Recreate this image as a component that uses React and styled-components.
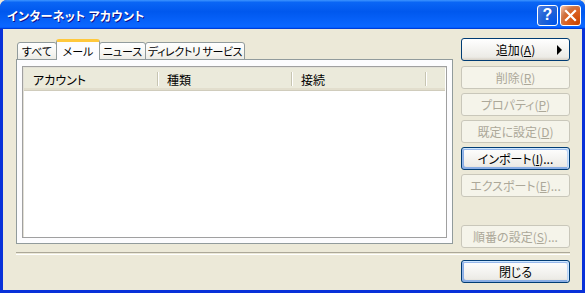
import React from 'react';
import styled, { createGlobalStyle } from "styled-components";

const Global = createGlobalStyle`
  html, body { margin: 0; padding: 0; background: #ECE9D8; }
  body {
    font-family: "Noto Sans CJK JP", "Liberation Sans", sans-serif;
    font-feature-settings: "palt";
    font-size: 12px;
    color: #000;
  }
`;

const tabs = [
  { label: "すべて", w: 40 },
  { label: "メール", w: 44 },
  { label: "ニュース", w: 47 },
  { label: "ディレクトリ サービス", w: 100 },
];
const columns = ["アカウント", "種類", "接続"];

export default function App() {
  return (
    <>
      <Global />
      <Win>
        <TitleBar>
          <Title>インターネット アカウント</Title>
          <Caption>
            <HelpBtn>?</HelpBtn>
            <CloseBtn>
              <svg width="13" height="13" viewBox="0 0 13 13">
                <path d="M2 2 L11 11 M11 2 L2 11" stroke="#fff" strokeWidth="2.2" strokeLinecap="square" />
              </svg>
            </CloseBtn>
          </Caption>
        </TitleBar>
        <Client>
          <MainRow>
            <TabArea>
              <TabStrip>
                {tabs.map((t, i) => (
                  <Tab key={t.label} $w={t.w} $active={i === 1}>{t.label}</Tab>
                ))}
              </TabStrip>
              <Panel>
                <List>
                  <Header>
                    {columns.map((c) => (
                      <Col key={c}>{c}</Col>
                    ))}
                    <Filler />
                  </Header>
                </List>
              </Panel>
            </TabArea>
            <Buttons>
              <Btn $first>
                <span>追加(<u>A</u>)</span>
                <Arrow />
              </Btn>
              <Btn disabled>削除(<u>R</u>)</Btn>
              <Btn disabled>プロパティ(<u>P</u>)</Btn>
              <Btn disabled>既定に設定(<u>D</u>)</Btn>
              <Btn $focus>インポート(<u>I</u>)...</Btn>
              <Btn disabled>エクスポート(<u>E</u>)...</Btn>
              <Btn disabled $gap>順番の設定(<u>S</u>)...</Btn>
            </Buttons>
          </MainRow>
          <Separator />
          <Footer>
            <Btn $focus>閉じる</Btn>
          </Footer>
        </Client>
      </Win>
    </>
  );
}

const Win = styled.div`
  width: 585px;
  height: 293px;
  box-sizing: border-box;
  display: flex;
  flex-direction: column;
  background: #0831D9;
  border-radius: 7px 7px 0 0;
  overflow: hidden;
`;

const TitleBar = styled.div`
  height: 29px;
  flex-shrink: 0;
  display: flex;
  align-items: center;
  justify-content: space-between;
  padding: 0 4px 0 7px;
  background: linear-gradient(180deg, #3d95ff, #0a66f5 8%, #0058ee 40%, #0a66ff 88%, #0a66ff 93%, #005bff 95%, #003dd7 96%, #003dd7);
`;

const Title = styled.div`
  color: #fff;
  font-weight: 700;
  font-size: 12px;
  letter-spacing: 0.3px;
  text-shadow: 1px 1px #0f1089;
  margin-top: 1px;
`;

const Caption = styled.div`
  display: flex;
  gap: 2px;
  margin-top: 1px;
`;

const CapBase = styled.div`
  width: 21px;
  height: 21px;
  box-sizing: border-box;
  border: 1px solid #fff;
  border-radius: 3px;
  display: flex;
  align-items: center;
  justify-content: center;
`;

const HelpBtn = styled(CapBase)`
  background: radial-gradient(circle at 90% 90%, #0054e9 0%, #2263d5 55%, #4479e4 90%, #a3bbec 100%);
  color: #fff;
  font-family: "Liberation Sans", sans-serif;
  font-weight: 700;
  font-size: 16px;
`;

const CloseBtn = styled(CapBase)`
  background: radial-gradient(circle at 90% 90%, #cc4600 0%, #dc6527 55%, #cd7546 68%, #ffccb2 100%);
`;

const Client = styled.div`
  flex: 1;
  margin: 0 3px 3px;
  background: #ECE9D8;
  padding: 9px 12px 0 13px;
  display: flex;
  flex-direction: column;
`;

const MainRow = styled.div`
  display: flex;
  align-items: flex-start;
  gap: 8px;
`;

const TabArea = styled.div`
  width: 437px;
  margin-top: 1px;
  display: flex;
  flex-direction: column;
`;

const TabStrip = styled.div`
  display: flex;
  align-items: flex-end;
  height: 21px;
  padding-left: 1px;
  position: relative;
  z-index: 1;
`;

const Tab = styled.div`
  box-sizing: border-box;
  width: ${(p) => p.$w}px;
  height: ${(p) => (p.$active ? "21px" : "18px")};
  display: flex;
  align-items: center;
  justify-content: center;
  white-space: pre;
  line-height: 1;
  font-size: 11px;
  letter-spacing: ${(p) => (p.$w > 60 ? "-0.4px" : "0")};
  border: 1px solid #919b9c;
  border-bottom: ${(p) => (p.$active ? "none" : "1px solid #919b9c")};
  border-top: ${(p) => (p.$active ? "3px solid #ffc83c" : "1px solid #919b9c")};
  border-radius: 3px 3px 0 0;
  background: ${(p) => (p.$active ? "#fcfcfe" : "linear-gradient(180deg, #fff, #f6f6f2 60%, #ecebe5)")};
  z-index: ${(p) => (p.$active ? 2 : 1)};
  position: relative;
  & + & { margin-left: -1px; }
`;

const Panel = styled.div`
  margin-top: -1px;
  height: 185px;
  box-sizing: border-box;
  border: 1px solid #919b9c;
  background: #fcfcfe;
  padding: 6px 5px 5px;
  display: flex;
`;

const List = styled.div`
  flex: 1;
  border: 1px solid #a0a0a0;
  box-shadow: inset 1px 1px #e2e0d6;
  background: #fff;
  padding: 1px;
`;

const Header = styled.div`
  display: flex;
  height: 23px;
  box-sizing: border-box;
  background: #ebeadb;
  border-bottom: 1px solid #d0ccbc;
  box-shadow: inset 0 -2px #e2decd;
`;

const Col = styled.div`
  width: 134px;
  box-sizing: border-box;
  padding-left: 9px;
  display: flex;
  align-items: center;
  position: relative;
  &::after {
    content: "";
    position: absolute;
    right: 0;
    top: 4px;
    bottom: 4px;
    width: 1px;
    background: #c7c5b2;
    box-shadow: 1px 0 #fff;
  }
`;

const Filler = styled.div`
  flex: 1;
`;

const Buttons = styled.div`
  width: 109px;
  display: flex;
  flex-direction: column;
  gap: 4px;
`;

const Btn = styled.button`
  font: inherit;
  font-feature-settings: "palt";
  height: 23px;
  width: 109px;
  box-sizing: border-box;
  padding: 0 6px;
  border: 1px solid ${(p) => (p.disabled ? "#c9c7ba" : "#003c74")};
  border-radius: 3px;
  color: ${(p) => (p.disabled ? "#aca899" : "#000")};
  background: ${(p) => (p.disabled ? "#f5f4ea" : "linear-gradient(180deg, #fff, #ecebe6 86%, #d6d0c5)")};
  display: flex;
  align-items: center;
  justify-content: center;
  position: relative;
  line-height: 1;
  margin-bottom: ${(p) => (p.$first ? "1px" : "0")};
  margin-top: ${(p) => (p.$gap ? "24px" : "0")};
  box-shadow: ${(p) =>
    p.$focus
      ? "inset -1px 1px #cee7ff, inset 1px 2px #98b8ea, inset -2px 2px #bcd4f6, inset 1px -1px #89ade4, inset 2px -2px #89ade4"
      : "none"};
  u { text-decoration-thickness: 1px; text-underline-offset: 1px; }
`;

const Arrow = styled.span`
  position: absolute;
  right: 7px;
  top: 6px;
  width: 0;
  height: 0;
  border-top: 5px solid transparent;
  border-bottom: 5px solid transparent;
  border-left: 5px solid #000;
`;

const Separator = styled.div`
  margin-top: 4px;
  height: 1px;
  border-top: 1px solid #aca899;
  border-bottom: 1px solid #fff;
`;

const Footer = styled.div`
  display: flex;
  justify-content: flex-end;
  margin-top: 5px;
`;
